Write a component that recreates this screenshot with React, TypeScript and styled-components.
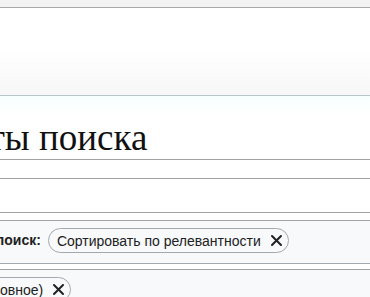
import React from 'react';
import styled, { createGlobalStyle } from 'styled-components';

const GlobalStyle = createGlobalStyle`
	html, body {
		margin: 0;
		padding: 0;
		background: #ffffff;
		overflow: hidden;
	}
	body {
		font-family: 'Liberation Sans', Arial, sans-serif;
	}
`;

const Page = styled.div`
	width: 370px;
	height: 297px;
	overflow: hidden;
	display: flex;
	flex-direction: column;
	& > * {
		flex-shrink: 0;
	}
`;

const TopStrip = styled.div`
	height: 7px;
	background: #f3f3f3;
	border-bottom: 1px solid #a9a9a9;
`;

const Header = styled.header`
	height: 87px;
	background: linear-gradient(to bottom, #ffffff 0%, #ffffff 45%, #f8f7f8 100%);
	border-bottom: 1px solid #b7c6c6;
`;

const Content = styled.main`
	display: flex;
	flex-direction: column;
	background: linear-gradient(to bottom, #f7fefe 0px, #ffffff 20px);
	& > * {
		flex-shrink: 0;
	}
`;

const Heading = styled.h1<{ shift: number }>`
	margin: 0;
	height: 64px;
	display: flex;
	align-items: flex-end;
	padding-bottom: 3px;
	box-sizing: border-box;
	border-bottom: 1px solid #a2a2a2;
	font-family: 'Liberation Serif', 'Times New Roman', serif;
	font-weight: 400;
	font-size: 37px;
	line-height: 1;
	color: #111111;
	white-space: nowrap;
	span {
		margin-left: ${({ shift }) => -shift}px;
	}
`;

const Rule = styled.div<{ h: number }>`
	height: ${({ h }) => h}px;
	border-bottom: 1px solid #a2a2a2;
`;

const FilterRow = styled.div<{ shift: number }>`
	height: 43px;
	box-sizing: border-box;
	padding-top: 7px;
	background: #f8f9fa;
	border-bottom: 1px solid #a2a9b1;
	display: flex;
	align-items: flex-start;
	gap: 7px;
	white-space: nowrap;
	margin-left: ${({ shift }) => -shift}px;
`;

const Label = styled.b`
	font-size: 14px;
	line-height: 24px;
	color: #202122;
`;

const Chip = styled.span`
	display: inline-flex;
	align-items: center;
	gap: 9px;
	height: 25px;
	box-sizing: border-box;
	padding: 0 5px 0 8px;
	border: 1px solid #a2a9b1;
	border-radius: 13px;
	background: #f8f9fa;
	font-size: 14px;
	color: #202122;
`;

const Close = () => (
	<svg width="13" height="13" viewBox="0 0 13 13">
		<path d="M2 2 L11 11 M11 2 L2 11" stroke="#202122" strokeWidth="2" strokeLinecap="round" />
	</svg>
);

export default function App() {
	return (
		<Page>
			<GlobalStyle />
			<TopStrip />
			<Header />
			<Content>
				<Heading shift={145}>
					<span>Результаты поиска</span>
				</Heading>
				<Rule h={18} />
				<Rule h={33} />
				<Rule h={7} />
				<FilterRow shift={37}>
					<Label>Ещё поиск:</Label>
					<Chip>
						Сортировать по релевантности <Close />
					</Chip>
				</FilterRow>
				<Rule h={5} />
				<FilterRow shift={134}>
					<Chip>
						Пространство (Основное) <Close />
					</Chip>
				</FilterRow>
			</Content>
		</Page>
	);
}
